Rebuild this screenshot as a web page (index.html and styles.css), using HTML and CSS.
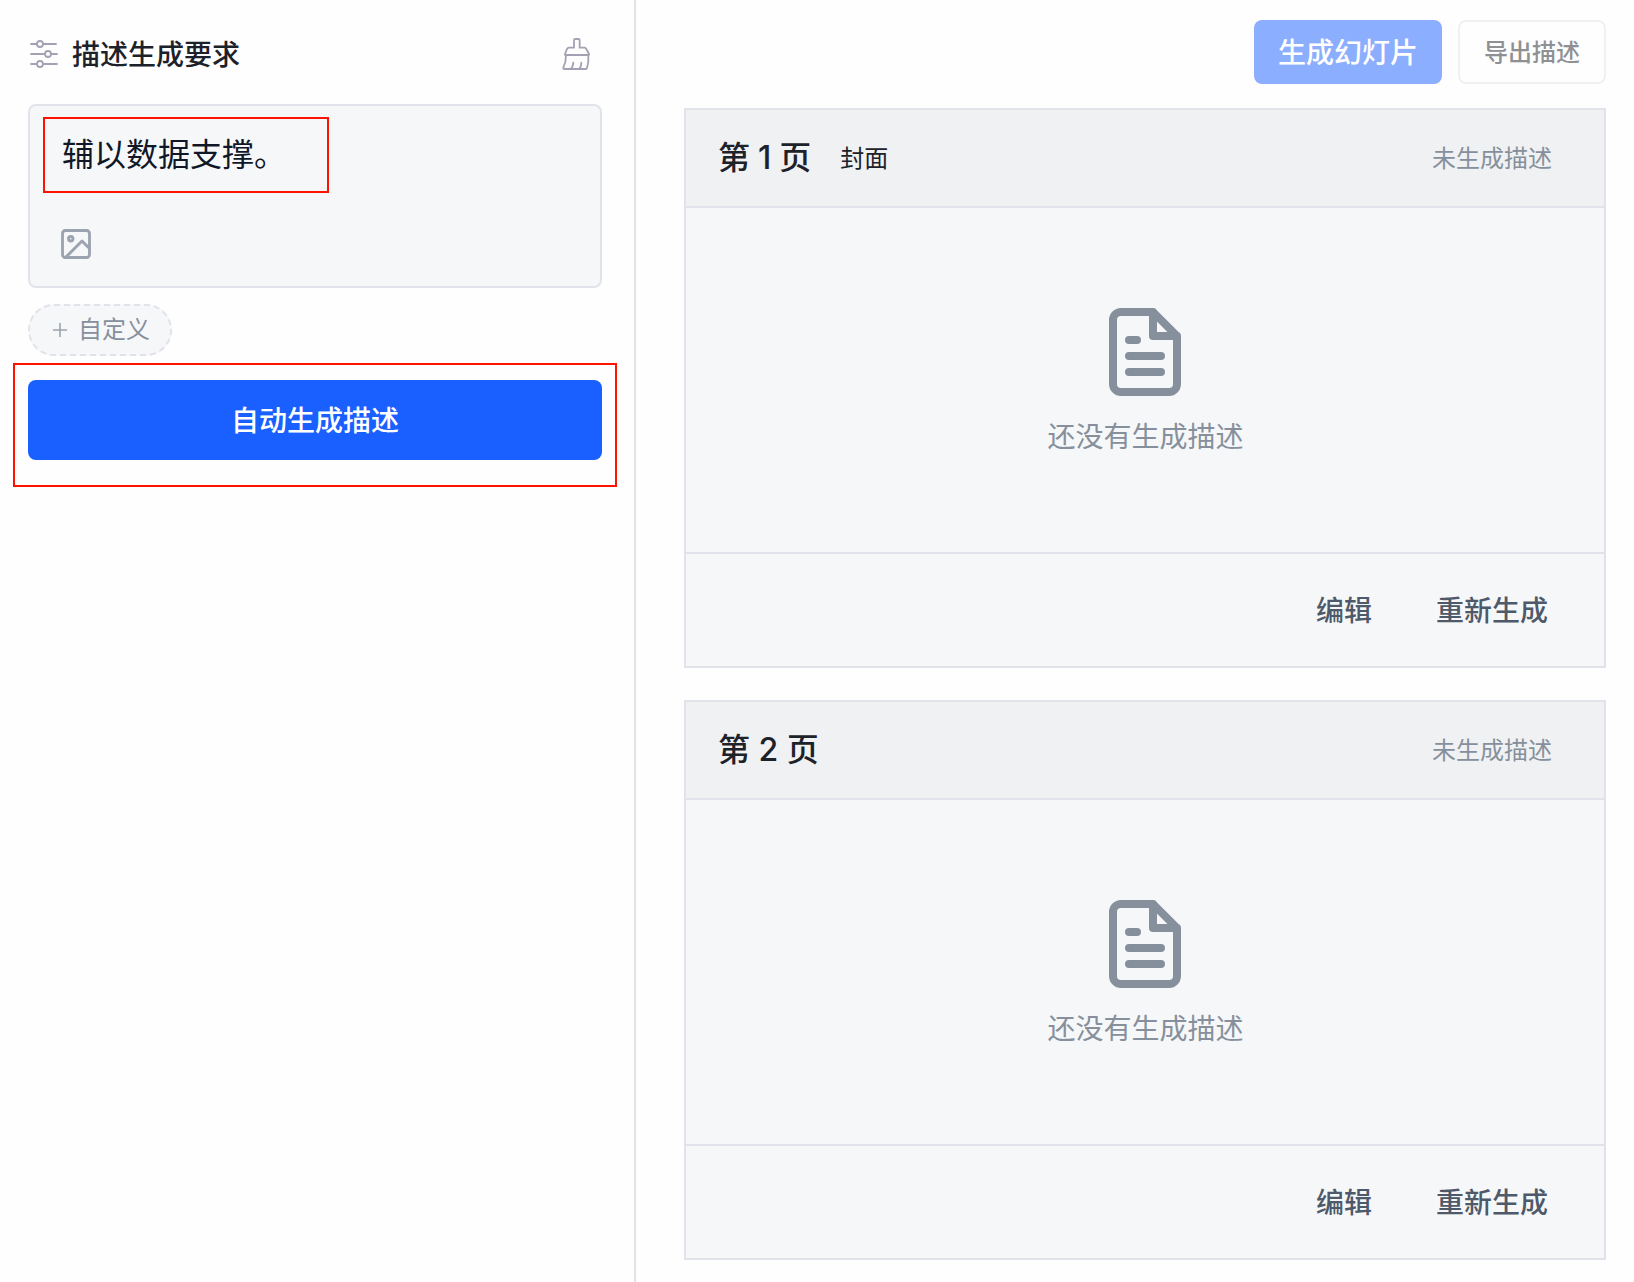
FILE: index.html
```html
<!DOCTYPE html>
<html lang="zh-CN">
<head>
<meta charset="utf-8">
<title>描述生成要求</title>
<link rel="stylesheet" href="styles.css">
</head>
<body>
<div class="app">
  <aside class="sidebar">
    <header class="side-head">
      <svg class="icon-sliders" viewBox="28 38 32 32" aria-hidden="true">
        <path d="M31 44h6M43 44h13M31 54h14M51 54h6M31 64h6M43 64h14"/>
        <circle cx="40" cy="44" r="3"/><circle cx="48" cy="54" r="3"/><circle cx="40" cy="64" r="3"/>
      </svg>
      <h1 class="side-title">描述生成要求</h1>
      <svg class="icon-broom" viewBox="780 48 96 108" aria-hidden="true">
        <path d="M822 83V61q0-4 4-4h9q4 0 4 4v22h14q4 0 6 4l8 15q1 3-2 3h-68q-3 0-2-3l6-15q2-4 6-4z"/>
        <path d="M798 107c0 15-3 25-8 36q-1 4 3 4h64q3 0 4-3c5-14 5-25 4-37M820 128q-1 12-7 18M844 128q0 12-6 18"/>
      </svg>
    </header>
    <section class="prompt">
      <p class="prompt-text">辅以数据支撑。</p>
      <svg class="icon-image" viewBox="0 0 24 24" aria-hidden="true">
        <rect x="3" y="3" width="18" height="18" rx="2"/><circle cx="8.5" cy="8.5" r="1.5"/><path d="m21 15-5-5L5 21"/>
      </svg>
      <span class="mark mark-text"></span>
    </section>
    <button class="chip">
      <svg class="chip-outline" viewBox="0 0 144 52" aria-hidden="true"><rect x="1" y="1" width="142" height="50" rx="25"/></svg>
      <svg class="icon-plus" viewBox="0 0 14 14" aria-hidden="true"><path d="M0 7h14M7 0v14"/></svg>
      <span>自定义</span>
    </button>
    <div class="generate">
      <button class="btn btn-main">自动生成描述</button>
      <span class="mark mark-button"></span>
    </div>
  </aside>
  <main class="content">
    <div class="toolbar">
      <button class="btn btn-slides">生成幻灯片</button>
      <button class="btn btn-export">导出描述</button>
    </div>
    <article class="card">
      <header class="card-head"><h2 class="card-title card-title-one">第 1 页</h2><span class="card-kind">封面</span><span class="card-status">未生成描述</span></header>
      <div class="card-body">
        <svg class="icon-file" viewBox="0 0 24 24" aria-hidden="true"><path d="M14 2H6a2 2 0 0 0-2 2v16a2 2 0 0 0 2 2h12a2 2 0 0 0 2-2V8zM14 2v6h6M10 9H8M16 13H8M16 17H8"/></svg>
        <p class="empty">还没有生成描述</p>
      </div>
      <footer class="card-foot"><button class="link">编辑</button><button class="link">重新生成</button></footer>
    </article>
    <article class="card">
      <header class="card-head"><h2 class="card-title">第 2 页</h2><span class="card-status">未生成描述</span></header>
      <div class="card-body">
        <svg class="icon-file" viewBox="0 0 24 24" aria-hidden="true"><path d="M14 2H6a2 2 0 0 0-2 2v16a2 2 0 0 0 2 2h12a2 2 0 0 0 2-2V8zM14 2v6h6M10 9H8M16 13H8M16 17H8"/></svg>
        <p class="empty">还没有生成描述</p>
      </div>
      <footer class="card-foot"><button class="link">编辑</button><button class="link">重新生成</button></footer>
    </article>
  </main>
</div>
</body>
</html>
```
FILE: styles.css
```css
* { box-sizing: border-box; }
body, h1, h2, p { margin: 0; }
body {
  background: #fefefe;
  color: #1d2129;
  font-family: Inter, "Noto Sans CJK SC", sans-serif;
  overflow: hidden;
}
button { font: inherit; border: 0; padding: 0; margin: 0; background: none; }
svg { display: block; flex: none; fill: none; stroke-linecap: round; stroke-linejoin: round; }

.app { display: flex; height: 1282px; }

.sidebar {
  width: 636px;
  flex: none;
  padding: 0 32px 0 28px;
  border-right: 2px solid #e2e2e9;
}
.side-head { display: flex; align-items: center; height: 104px; }
.icon-sliders { width: 32px; height: 32px; margin-top: 4px; stroke: #a3a1b3; stroke-width: 1.8; }
.side-title { margin: 6px auto 0 12px; font-size: 28px; line-height: 40px; font-weight: 500; }
.icon-broom { width: 32px; height: 36px; margin: 4px 10px 0 0; stroke: #a3a1b3; stroke-width: 5.4; }

.prompt {
  position: relative;
  height: 184px;
  padding: 25px 28px 23px;
  border: 2px solid #e2e3ea;
  border-radius: 8px;
  background: #f6f7f9;
}
.prompt-text { padding-left: 4px; font-size: 32px; line-height: 48px; color: #101828; }
.icon-image { width: 36px; height: 36px; margin-top: 47px; stroke: #9ca3b0; stroke-width: 1.9; }
.mark { position: absolute; border: 2px solid #ff1200; pointer-events: none; }
.mark-text { left: 13px; top: 11px; width: 286px; height: 76px; }

.chip {
  position: relative;
  display: flex;
  align-items: center;
  gap: 11px;
  width: 144px;
  height: 52px;
  margin-top: 16px;
  padding-left: 25px;
  border-radius: 26px;
  background: #f6f7f9;
  color: #86909c;
  font-size: 24px;
  line-height: 36px;
}
.chip-outline { position: absolute; inset: 0; width: 144px; height: 52px; stroke: #e2e3ea; stroke-width: 2; stroke-dasharray: 6 4; stroke-linecap: butt; }
.icon-plus { width: 14px; height: 14px; stroke: #9aa3ad; stroke-width: 1.6; stroke-linecap: butt; }

.generate { position: relative; margin-top: 24px; }
.mark-button { left: -15px; top: -17px; width: 604px; height: 124px; }
.btn { display: flex; align-items: center; justify-content: center; padding-bottom: 2px; border-radius: 8px; font-size: 28px; font-weight: 500; color: #fff; }
.btn-main { width: 574px; height: 80px; background: #1a5fff; }

.content { flex: 1; padding: 20px 28px 0 48px; display: flex; flex-direction: column; }
.toolbar { display: flex; justify-content: flex-end; gap: 16px; margin-bottom: 24px; }
.btn-slides { width: 188px; height: 64px; background: #8caeff; }
.btn-export { width: 148px; height: 64px; padding-bottom: 4px; border: 2px solid #f1f1f3; font-size: 24px; color: #8e9094; }

.card { height: 560px; flex: none; display: flex; flex-direction: column; border: 2px solid #e2e3ea; background: #f6f7f9; margin-bottom: 32px; }
.card-head { display: flex; align-items: center; height: 98px; padding: 0 52px 0 32px; border-bottom: 2px solid #e2e3ea; background: #f0f1f3; }
.card-title { font-size: 32px; line-height: 44px; font-weight: 500; }
.card-title-one { word-spacing: -0.5px; }
.card-kind { margin-left: 29px; padding-bottom: 4px; font-size: 24px; }
.card-status { margin-left: auto; padding-bottom: 4px; font-size: 24px; color: #86909c; }
.card-body { flex: 1; display: flex; flex-direction: column; align-items: center; padding-top: 96px; }
.icon-file { width: 96px; height: 96px; stroke: #86909c; stroke-width: 2; }
.empty { margin-top: 17px; padding-left: 1px; font-size: 28px; line-height: 40px; color: #86909c; }
.card-foot { display: flex; align-items: center; justify-content: flex-end; gap: 64px; height: 114px; padding: 2px 56px 0 0; border-top: 2px solid #e2e3ea; }
.link { font-size: 28px; line-height: 40px; font-weight: 500; color: #4e5969; }
```
